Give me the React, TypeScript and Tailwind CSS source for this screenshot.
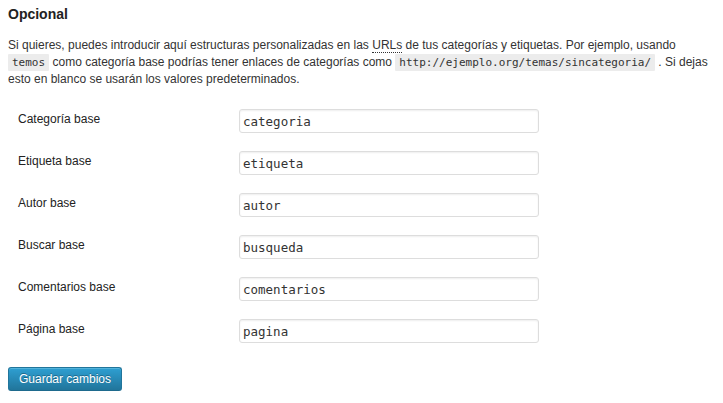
import React from 'react';

const fields = [
    { label: 'Categoría base', value: 'categoria' },
    { label: 'Etiqueta base', value: 'etiqueta' },
    { label: 'Autor base', value: 'autor' },
    { label: 'Buscar base', value: 'busqueda' },
    { label: 'Comentarios base', value: 'comentarios' },
    { label: 'Página base', value: 'pagina' },
];

const Code: React.FC<{ children: React.ReactNode }> = ({ children }) => (
    <code className="rounded-[1px] bg-[#ececec] px-[4px] py-[2px] font-['DejaVu_Sans_Mono',monospace] text-[11px] text-[#333]">
        {children}
    </code>
);

export default function App() {
    return (
        <div className="min-h-[403px] bg-white px-2 font-['Liberation_Sans',Arial,sans-serif] text-[12px] text-[#333]">
            <h3 className="pt-[6px] text-[14px] leading-[16px] font-bold text-[#222]">Opcional</h3>

            <p className="mt-[14.5px] whitespace-nowrap leading-[17px]">
                Si quieres, puedes introducir aquí estructuras personalizadas en las{' '}
                <abbr title="Universal Resource Locator" className="border-b border-dotted border-[#333] no-underline">
                    URLs
                </abbr>{' '}
                de tus categorías y etiquetas. Por ejemplo, usando
                <br />
                <Code>temos</Code> como categoría base podrías tener enlaces de categorías como{' '}
                <Code>http://ejemplo.org/temas/sincategoria/</Code> . Si dejas
                <br />
                esto en blanco se usarán los valores predeterminados.
            </p>

            <div className="mt-[12.5px]">
                {fields.map((f) => (
                    <div key={f.label} className="flex h-[42px] items-start">
                        <label className="mt-[10.5px] w-[231px] pl-[10px] leading-[16px] text-[#222]">{f.label}</label>
                        <input
                            type="text"
                            defaultValue={f.value}
                            className="mt-[9px] h-[24px] w-[300px] rounded-[3px] border border-[#dddddd] bg-white px-[3px] font-['DejaVu_Sans_Mono',monospace] text-[12.5px] text-[#333] shadow-[inset_0_1px_2px_rgba(0,0,0,0.07)] outline-none"
                        />
                    </div>
                ))}
            </div>

            <button
                type="button"
                className="mt-[15px] h-[24px] rounded-[3px] border border-[#21759b] border-b-[#1e6a8d] bg-gradient-to-b from-[#2e9fd2] to-[#21759b] px-[10px] text-[12px] leading-[20px] text-white [text-shadow:0_-1px_0_rgba(0,0,0,0.3)] shadow-[inset_0_1px_0_rgba(120,200,230,0.5)]"
            >
                Guardar cambios
            </button>
        </div>
    );
}
